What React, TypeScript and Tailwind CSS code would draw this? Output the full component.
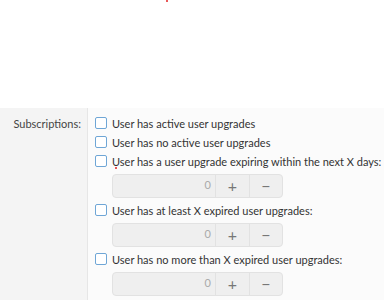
import React from "react";

function Check({ label }: { label: string }) {
  return (
    <div className="flex items-center h-[19px]">
      <span className="w-[12px] h-[12px] border border-[#6fa6d6] bg-white rounded-[2px] shrink-0" />
      <span className="ml-[5px] text-[11px] text-[#333] leading-[19px] whitespace-nowrap">{label}</span>
    </div>
  );
}

function Spinner() {
  return (
    <div className="ml-[17px] mt-[3px] mb-[3px] flex w-[171px] h-[24px] rounded-[4px] border border-[#e2e2e2] bg-[#efefef] text-[#aaa]">
      <div className="flex-1 flex items-center justify-end pr-[4px] text-[11px]">0</div>
      <div className="w-[34px] border-l border-[#e2e2e2] flex items-center justify-center text-[#777] text-[16px]">+</div>
      <div className="w-[33px] border-l border-[#e2e2e2] flex items-center justify-center text-[#777] text-[16px]">−</div>
    </div>
  );
}

export default function App() {
  return (
    <div className="relative w-[384px] h-[300px] overflow-hidden bg-white font-['Lato',sans-serif]">
      <span className="absolute left-[166px] top-0 w-[2px] h-[2px] bg-[#e02020] rounded-full" />
      <div className="h-[108px]" />
      <div className="flex h-[192px]">
        <div className="w-[88px] bg-[#f4f4f4] border-r border-[#e6e6e6] text-right pr-[6px] pt-[6px] text-[11px] text-[#444] leading-[19px]">
          Subscriptions:
        </div>
        <div className="relative flex-1 bg-[#fbfbfb] pl-[7px] pt-[5.5px]">
          <Check label="User has active user upgrades" />
          <Check label="User has no active user upgrades" />
          <Check label="User has a user upgrade expiring within the next X days:" />
          <Spinner />
          <Check label="User has at least X expired user upgrades:" />
          <Spinner />
          <Check label="User has no more than X expired user upgrades:" />
          <Spinner />
          <span className="absolute left-[27px] top-[59px] w-[2px] h-[2px] bg-[#e02020] rounded-full" />
        </div>
      </div>
    </div>
  );
}
